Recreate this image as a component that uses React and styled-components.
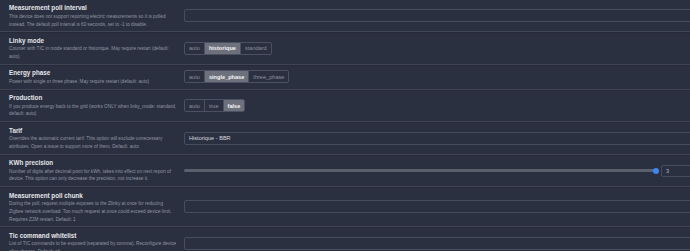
import React from 'react';
import styled, { createGlobalStyle } from 'styled-components';

const GlobalStyle = createGlobalStyle`
  html, body {
    margin: 0;
    padding: 0;
    background: #2b3040;
    overflow: hidden;
  }
  body {
    font-family: "Liberation Sans", Arial, sans-serif;
  }
`;

const Page = styled.div`
  width: 702px;
  background: #2b3040;
`;

const Row = styled.div`
  display: grid;
  grid-template-columns: 184px 1fr;
  align-items: center;
  padding: 3.4px 0 3.2px;
  border-bottom: 1px solid #3f4555;
  box-shadow: 0 1px 0 #252938;
`;

const Label = styled.div`
  padding-left: 9px;
`;

const Title = styled.div`
  color: #e4e6ea;
  font-size: 6.3px;
  font-weight: bold;
  line-height: 9.5px;
`;

const Desc = styled.div`
  color: #9096a2;
  font-size: 4.7px;
  line-height: 7.7px;
  white-space: nowrap;
`;

const Field = styled.div`
  height: 13px;
  box-sizing: border-box;
  border: 1px solid #474d5d;
  border-radius: 2px;
  display: flex;
  align-items: center;
  padding: 0 4px;
  color: #d4d7dd;
  font-size: 5.6px;
`;

const Group = styled.div`
  display: inline-flex;
  justify-self: start;
  height: 13px;
  box-sizing: border-box;
  border: 1px solid #4b5162;
  border-radius: 2px;
  overflow: hidden;
`;

const Choice = styled.div`
  display: flex;
  align-items: center;
  padding: 0 4px;
  font-size: 5.6px;
  color: ${(p) => (p.active ? '#f4f4f6' : '#8c919d')};
  background: ${(p) => (p.active ? '#6d717c' : 'transparent')};
  font-weight: ${(p) => (p.active ? 'bold' : 'normal')};
  & + & {
    border-left: 1px solid #4b5162;
  }
`;

const SliderRow = styled.div`
  display: flex;
  align-items: center;
  gap: 5px;
`;

const Track = styled.div`
  position: relative;
  flex: 1;
  height: 3px;
  border-radius: 2px;
  background: #5b606d;
`;

const Thumb = styled.div`
  position: absolute;
  right: -3px;
  top: -1.5px;
  width: 6px;
  height: 6px;
  border-radius: 50%;
  background: #3d87f5;
`;

const NumberBox = styled(Field)`
  width: 41px;
  height: 12px;
  color: #b4b8c0;
`;

const settings = [
  {
    title: 'Measurement poll interval',
    desc: [
      'This device does not support reporting electric measurements so it is polled',
      'instead. The default poll interval is 60 seconds, set to -1 to disable.',
    ],
    kind: 'input',
  },
  {
    title: 'Linky mode',
    desc: ['Counter with TIC in mode standard or historique. May require restart (default:', 'auto)'],
    kind: 'toggle',
    options: ['auto', 'historique', 'standard'],
    value: 'historique',
  },
  {
    title: 'Energy phase',
    desc: ['Power with single or three phase. May require restart (default: auto)'],
    kind: 'toggle',
    options: ['auto', 'single_phase', 'three_phase'],
    value: 'single_phase',
  },
  {
    title: 'Production',
    desc: [
      'If you produce energy back to the grid (works ONLY when linky_mode: standard,',
      'default: auto)',
    ],
    kind: 'toggle',
    options: ['auto', 'true', 'false'],
    value: 'false',
  },
  {
    title: 'Tarif',
    desc: [
      'Overrides the automatic current tarif. This option will exclude unnecessary',
      'attributes. Open a issue to support more of them. Default: auto',
    ],
    kind: 'select',
    value: 'Historique - BBR',
  },
  {
    title: 'KWh precision',
    desc: [
      'Number of digits after decimal point for kWh, takes into effect on next report of',
      'device. This option can only decrease the precision, not increase it.',
    ],
    kind: 'slider',
    value: 3,
  },
  {
    title: 'Measurement poll chunk',
    desc: [
      'During the poll, request multiple exposes to the Zlinky at once for reducing',
      'Zigbee network overload. Too much request at once could exceed device limit.',
      'Requires Z2M restart. Default: 1',
    ],
    kind: 'input',
  },
  {
    title: 'Tic command whitelist',
    desc: [
      'List of TIC commands to be exposed (separated by comma). Reconfigure device',
      'after change. Default: all',
    ],
    kind: 'input',
  },
];

function Control({ item }) {
  if (item.kind === 'toggle') {
    return (
      <Group>
        {item.options.map((o) => (
          <Choice key={o} active={o === item.value}>
            {o}
          </Choice>
        ))}
      </Group>
    );
  }
  if (item.kind === 'slider') {
    return (
      <SliderRow>
        <Track>
          <Thumb />
        </Track>
        <NumberBox>{item.value}</NumberBox>
      </SliderRow>
    );
  }
  if (item.kind === 'select') {
    return <Field>{item.value}</Field>;
  }
  return <Field />;
}

export default function App() {
  return (
    <>
      <GlobalStyle />
      <Page>
        {settings.map((item) => (
          <Row key={item.title}>
            <Label>
              <Title>{item.title}</Title>
              {item.desc.map((line) => (
                <Desc key={line}>{line}</Desc>
              ))}
            </Label>
            <Control item={item} />
          </Row>
        ))}
      </Page>
    </>
  );
}
